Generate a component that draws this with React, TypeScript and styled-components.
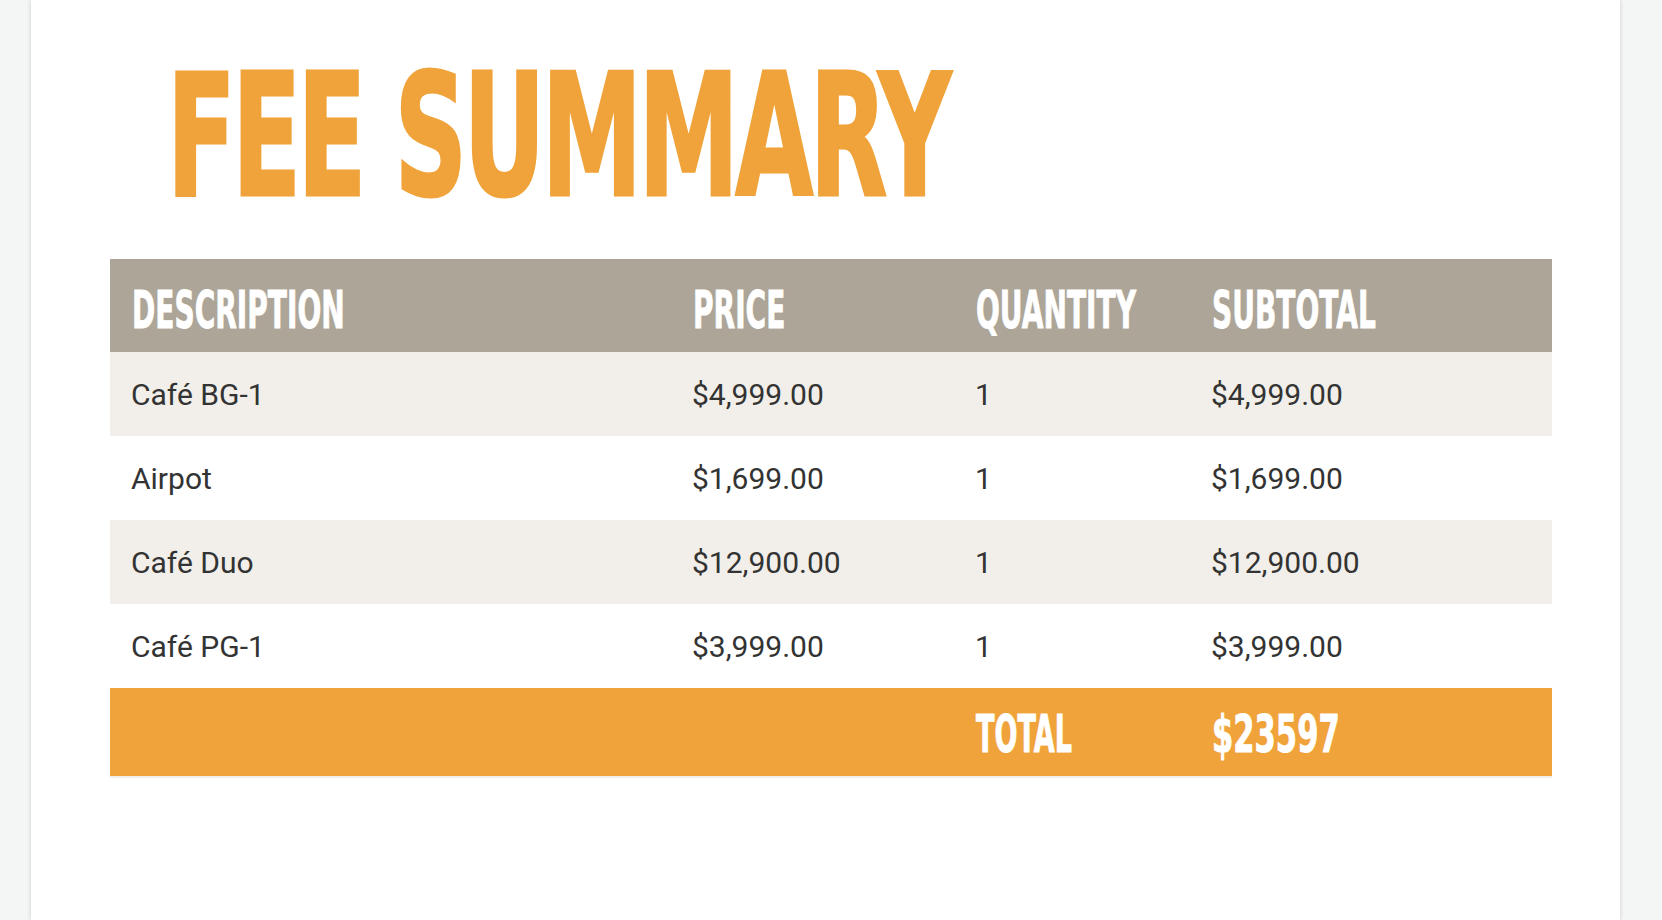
import React from "react";
import styled, { createGlobalStyle } from "styled-components";

const Global = createGlobalStyle`
  html, body { margin: 0; padding: 0; background: #f4f6f5; }
  body { font-family: Roboto, "Liberation Sans", sans-serif; overflow: hidden; }
`;

const Page = styled.div`
  height: 920px;
  padding-left: 31px;
  display: flex;
`;

const Sheet = styled.div`
  width: 1589px;
  height: 920px;
  background: #ffffff;
  box-shadow: 0 0 4px rgba(0, 0, 0, 0.18);
  padding: 0 68px 0 79px;
  box-sizing: border-box;
  display: flex;
  flex-direction: column;
`;

const TitleRow = styled.div`
  height: 259px;
  padding-left: 57px;
  box-sizing: border-box;
  display: flex;
  align-items: flex-start;
`;

const Title = styled.h1`
  margin: 0;
  margin-top: 51px;
  font-family: "DejaVu Sans", sans-serif;
  font-weight: 700;
  font-size: 170px;
  letter-spacing: -6px;
  line-height: 1;
  color: #f0a33a;
  white-space: nowrap;
  display: inline-block;
  transform: scaleX(0.593);
  transform-origin: left top;
  -webkit-text-stroke: 3px #f0a33a;
`;

const Table = styled.div`
  display: flex;
  flex-direction: column;
  border-bottom: 2px solid #f2efea;
`;

const Row = styled.div<{ $bg: string; $h: number }>`
  display: grid;
  grid-template-columns: 561px 283px 236px 1fr;
  height: ${(p) => p.$h}px;
  background: ${(p) => p.$bg};
  align-items: center;
  padding-left: 21px;
`;

const HeadCell = styled.div<{ $shift: number }>`
  font-family: "DejaVu Sans", sans-serif;
  font-weight: 700;
  font-size: 51px;
  line-height: 1;
  color: #ffffff;
  white-space: nowrap;
  padding-top: ${(p) => p.$shift}px;
  padding-left: 1px;
`;

const Squeeze = styled.span<{ $k: number }>`
  display: inline-block;
  transform: scaleX(${(p) => p.$k});
  transform-origin: left center;
  -webkit-text-stroke: 1px #ffffff;
`;

const Cell = styled.div`
  font-family: Roboto, "Liberation Sans", sans-serif;
  font-size: 30px;
  color: #333333;
  white-space: nowrap;
`;

const rows = [
  ["Café BG-1", "$4,999.00", "1", "$4,999.00"],
  ["Airpot", "$1,699.00", "1", "$1,699.00"],
  ["Café Duo", "$12,900.00", "1", "$12,900.00"],
  ["Café PG-1", "$3,999.00", "1", "$3,999.00"],
];

export default function App() {
  return (
    <>
      <Global />
      <Page>
        <Sheet>
          <TitleRow>
            <Title>FEE SUMMARY</Title>
          </TitleRow>
          <Table>
            <Row $bg="#aca598" $h={93}>
              {["DESCRIPTION", "PRICE", "QUANTITY", "SUBTOTAL"].map((h) => (
                <HeadCell key={h} $shift={10}>
                  <Squeeze $k={0.55}>{h}</Squeeze>
                </HeadCell>
              ))}
            </Row>
            {rows.map((r, i) => (
              <Row key={i} $bg={i % 2 === 0 ? "#f2efea" : "#ffffff"} $h={84}>
                {r.map((c, j) => (
                  <Cell key={j}>{c}</Cell>
                ))}
              </Row>
            ))}
            <Row $bg="#f0a33a" $h={88}>
              <div />
              <div />
              <HeadCell $shift={4}>
                <Squeeze $k={0.53}>TOTAL</Squeeze>
              </HeadCell>
              <HeadCell $shift={4}>
                <Squeeze $k={0.6}>$23597</Squeeze>
              </HeadCell>
            </Row>
          </Table>
        </Sheet>
      </Page>
    </>
  );
}
